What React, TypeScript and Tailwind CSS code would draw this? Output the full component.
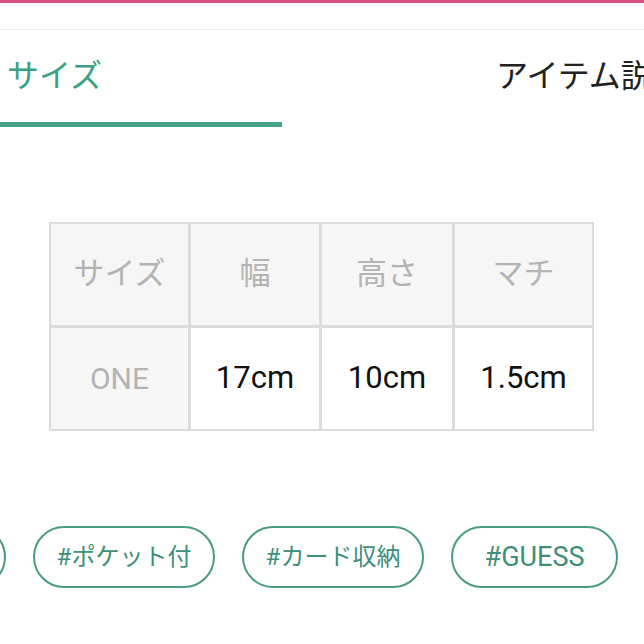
import React from "react";

const heads = ["サイズ", "幅", "高さ", "マチ"];
const vals = ["17cm", "10cm", "1.5cm"];
const tags = [
  { t: "#ポケット付", w: "w-[182px] text-[24px]" },
  { t: "#カード収納", w: "w-[182px] text-[24px]" },
  { t: "#GUESS", w: "w-[167px] text-[27px]" },
];

const App = () => {
  return (
    <div className="w-[644px] h-[644px] bg-white overflow-hidden font-['Roboto','Noto_Sans_CJK_JP',sans-serif]">
      {/* top strip */}
      <div className="h-[3px] bg-[#d9527c]" />
      <div className="h-[26px]" />
      <div className="h-px bg-[#ececec]" />

      {/* TABS */}
      <div className="flex whitespace-nowrap">
        <div className="w-[282px] shrink-0 flex flex-col">
          <div className="h-[92px] flex items-center pl-[7px] text-[32px] text-[#3aa083]">
            サイズ
          </div>
          <div className="h-[5px] bg-[#45a48a]" />
        </div>
        <div className="ml-[214px] h-[92px] flex items-center text-[32px] text-[#222]">
          アイテム説明
        </div>
      </div>

      {/* SIZE TABLE */}
      <div className="mt-[95px] ml-[49px] w-fit grid grid-cols-[137px_128px_130px_137px] grid-rows-[101px_101px] gap-[3px] p-[2px] bg-[#dcdcdc]">
        {heads.map((h) => (
          <div
            key={h}
            className="bg-[#f6f6f6] flex items-center justify-center text-[31px] text-[#b3b3b3]"
          >
            {h}
          </div>
        ))}
        <div className="bg-[#f6f6f6] flex items-center justify-center text-[30px] text-[#b3b3b3]">
          ONE
        </div>
        {vals.map((v) => (
          <div
            key={v}
            className="bg-white flex items-center justify-center text-[31px] text-[#111]"
          >
            {v}
          </div>
        ))}
      </div>

      {/* TAGS */}
      <div className="mt-[95px] flex gap-[27px] whitespace-nowrap">
        <div className="w-[150px] h-[62px] shrink-0 ml-[-144px] rounded-full border-2 border-[#4a9a85]" />
        {tags.map((tag) => (
          <div
            key={tag.t}
            className={`${tag.w} h-[62px] shrink-0 flex items-center justify-center rounded-full border-2 border-[#4a9a85] text-[#3d8f7a]`}
          >
            {tag.t}
          </div>
        ))}
      </div>
    </div>
  );
};

export default App;
